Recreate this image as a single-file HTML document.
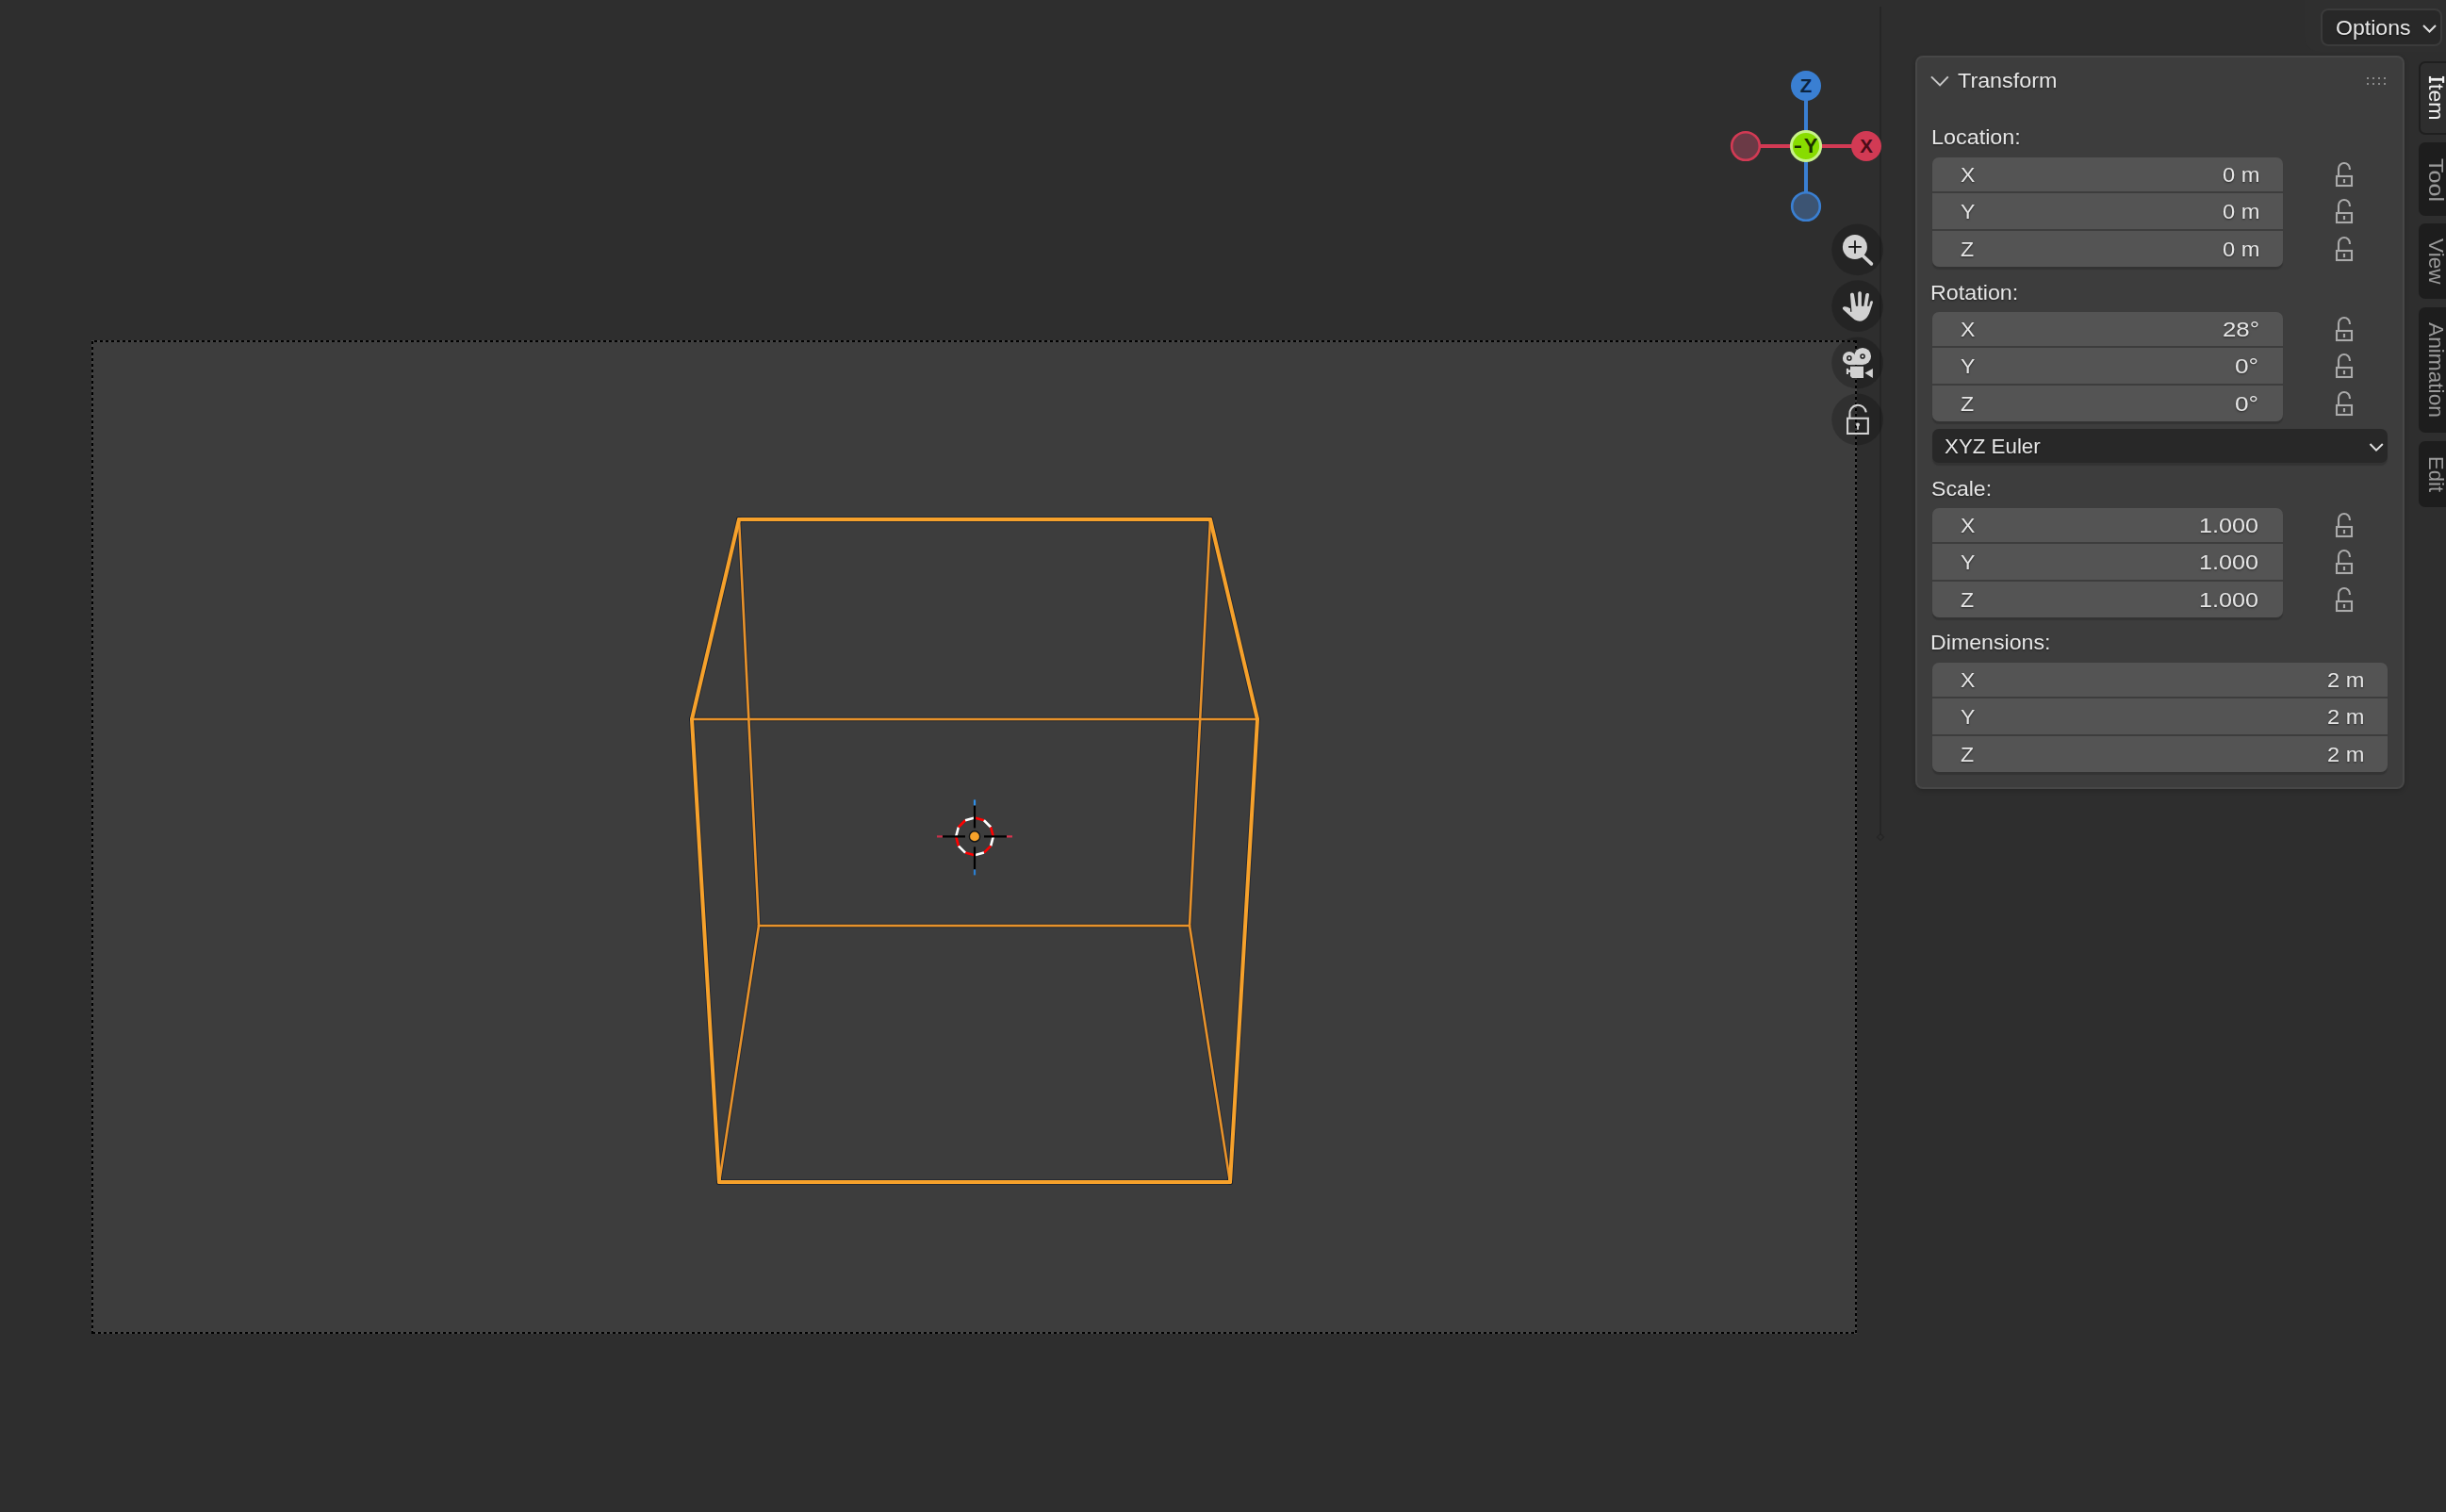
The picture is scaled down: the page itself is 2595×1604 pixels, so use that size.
<!DOCTYPE html><html><head><meta charset="utf-8"><style>
*{margin:0;padding:0;box-sizing:border-box}
html,body{width:2595px;height:1604px;overflow:hidden;background:#2e2e2e}
body{position:relative;font-family:"Liberation Sans", sans-serif;color:#e6e6e6}
.a{position:absolute}
.t{position:absolute;font-size:22px;line-height:30px;height:30px;white-space:nowrap;text-shadow:0 1px 2px rgba(0,0,0,.55);filter:grayscale(1)}
.blk{position:absolute;background:#545454;border-radius:7px;box-shadow:0 3px 1px rgba(0,0,0,.16)}
.sep{position:absolute;left:0;right:0;height:2px;background:#3d3d3d}
.tab{position:absolute;left:2566px;width:40px;border-radius:7px;background:#1d1d1d}
.tab span{position:absolute;left:50%;top:50%;transform:translate(-50%,-50%) rotate(90deg);font-size:22px;line-height:22px;white-space:nowrap;color:#a0a0a0}
</style></head><body><div class="a" style="left:97px;top:361px;width:1873px;height:1054px;background:#3d3d3d"></div>
<div class="a" style="left:1994px;top:7px;width:2px;height:879px;background:#262626"></div>
<div class="a" style="left:1991.5px;top:884.5px;width:6px;height:6px;border:1.6px solid #242424;transform:rotate(45deg)"></div>
<svg class="a" style="left:0;top:0" width="2595" height="1604" viewBox="0 0 2595 1604"><g fill="none" stroke-width="2"><rect x="98" y="362" width="1871" height="1052" stroke="#454545"/><line x1="97" y1="362" x2="1970" y2="362" stroke="#000" stroke-dasharray="3 3" stroke-dashoffset="3"/><line x1="97" y1="1414" x2="1970" y2="1414" stroke="#000" stroke-dasharray="3 3" stroke-dashoffset="5"/><line x1="98" y1="361" x2="98" y2="1415" stroke="#000" stroke-dasharray="3 3" stroke-dashoffset="-1"/><line x1="1969" y1="361" x2="1969" y2="1415" stroke="#000" stroke-dasharray="3 3" stroke-dashoffset="0"/></g><g stroke-linecap="round"><line x1="734" y1="763" x2="1334" y2="763" stroke="rgba(20,28,40,.55)" stroke-width="4.5" /><line x1="784" y1="551" x2="805" y2="982" stroke="rgba(20,28,40,.55)" stroke-width="4.5" /><line x1="1284" y1="551" x2="1262" y2="982" stroke="rgba(20,28,40,.55)" stroke-width="4.5" /><line x1="805" y1="982" x2="1262" y2="982" stroke="rgba(20,28,40,.55)" stroke-width="4.5" /><line x1="805" y1="982" x2="763" y2="1254" stroke="rgba(20,28,40,.55)" stroke-width="4.5" /><line x1="1262" y1="982" x2="1305" y2="1254" stroke="rgba(20,28,40,.55)" stroke-width="4.5" /><line x1="784" y1="551" x2="1284" y2="551" stroke="rgba(20,28,40,.55)" stroke-width="6" /><line x1="784" y1="551" x2="734" y2="763" stroke="rgba(20,28,40,.55)" stroke-width="6" /><line x1="1284" y1="551" x2="1334" y2="763" stroke="rgba(20,28,40,.55)" stroke-width="6" /><line x1="734" y1="763" x2="763" y2="1254" stroke="rgba(20,28,40,.55)" stroke-width="6" /><line x1="1334" y1="763" x2="1305" y2="1254" stroke="rgba(20,28,40,.55)" stroke-width="6" /><line x1="763" y1="1254" x2="1305" y2="1254" stroke="rgba(20,28,40,.55)" stroke-width="6" /><line x1="734" y1="763" x2="1334" y2="763" stroke="#e8922a" stroke-width="2.6" /><line x1="784" y1="551" x2="805" y2="982" stroke="#e8922a" stroke-width="2.6" /><line x1="1284" y1="551" x2="1262" y2="982" stroke="#e8922a" stroke-width="2.6" /><line x1="805" y1="982" x2="1262" y2="982" stroke="#e8922a" stroke-width="2.6" /><line x1="805" y1="982" x2="763" y2="1254" stroke="#e8922a" stroke-width="2.6" /><line x1="1262" y1="982" x2="1305" y2="1254" stroke="#e8922a" stroke-width="2.6" /><line x1="784" y1="551" x2="1284" y2="551" stroke="#f6a12b" stroke-width="4" /><line x1="784" y1="551" x2="734" y2="763" stroke="#f6a12b" stroke-width="4" /><line x1="1284" y1="551" x2="1334" y2="763" stroke="#f6a12b" stroke-width="4" /><line x1="734" y1="763" x2="763" y2="1254" stroke="#f6a12b" stroke-width="4" /><line x1="1334" y1="763" x2="1305" y2="1254" stroke="#f6a12b" stroke-width="4" /><line x1="763" y1="1254" x2="1305" y2="1254" stroke="#f6a12b" stroke-width="4" /></g><g stroke-width="2.6" stroke-linecap="butt"><line x1="1034.00" y1="867.60" x2="1043.90" y2="870.25" stroke="#ff0000"/><line x1="1043.90" y1="870.25" x2="1051.15" y2="877.50" stroke="#ffffff"/><line x1="1051.15" y1="877.50" x2="1053.80" y2="887.40" stroke="#ff0000"/><line x1="1053.80" y1="887.40" x2="1051.15" y2="897.30" stroke="#ffffff"/><line x1="1051.15" y1="897.30" x2="1043.90" y2="904.55" stroke="#ff0000"/><line x1="1043.90" y1="904.55" x2="1034.00" y2="907.20" stroke="#ffffff"/><line x1="1034.00" y1="907.20" x2="1024.10" y2="904.55" stroke="#ff0000"/><line x1="1024.10" y1="904.55" x2="1016.85" y2="897.30" stroke="#ffffff"/><line x1="1016.85" y1="897.30" x2="1014.20" y2="887.40" stroke="#ff0000"/><line x1="1014.20" y1="887.40" x2="1016.85" y2="877.50" stroke="#ffffff"/><line x1="1016.85" y1="877.50" x2="1024.10" y2="870.25" stroke="#ff0000"/><line x1="1024.10" y1="870.25" x2="1034.00" y2="867.60" stroke="#ffffff"/></g><g stroke-width="2.2"><line x1="1000" y1="887.4" x2="1024" y2="887.4" stroke="#000"/><line x1="1044" y1="887.4" x2="1068" y2="887.4" stroke="#000"/><line x1="1034" y1="854.4" x2="1034" y2="878.4" stroke="#000"/><line x1="1034" y1="898.4" x2="1034" y2="922.4" stroke="#000"/><line x1="994" y1="887.4" x2="1000" y2="887.4" stroke="#c8304a"/><line x1="1068" y1="887.4" x2="1074" y2="887.4" stroke="#d8354f"/><line x1="1034" y1="848.4" x2="1034" y2="854.4" stroke="#2f8fe8"/><line x1="1034" y1="922.4" x2="1034" y2="928.4" stroke="#2a7ed0"/></g><circle cx="1034" cy="887.4" r="5.6" fill="#f7a22a" stroke="#101418" stroke-width="1.4"/><g><line x1="1916" y1="91" x2="1916" y2="219" stroke="#3a7fd2" stroke-width="4"/><line x1="1852" y1="155" x2="1980" y2="155" stroke="#d23a54" stroke-width="4"/><circle cx="1852" cy="155" r="14.8" fill="#6b3a46" stroke="#d23a54" stroke-width="2.6"/><circle cx="1916" cy="219" r="14.8" fill="#3c5473" stroke="#3a7fd2" stroke-width="2.6"/><circle cx="1916" cy="91" r="16" fill="#3a7fd2"/><circle cx="1980" cy="155" r="16" fill="#d23a54"/><circle cx="1916" cy="155" r="15.6" fill="#88dc00" stroke="#c8f28a" stroke-width="3"/><text x="1916" y="97.5" text-anchor="middle" font-family='"Liberation Sans", sans-serif' font-size="20.5" font-weight="bold" fill="#0c2440">Z</text><text x="1980" y="161.9" text-anchor="middle" font-family='"Liberation Sans", sans-serif' font-size="20.5" font-weight="bold" fill="#4a0c18">X</text><rect x="1903.9" y="154.5" width="7" height="2.5" fill="#1c3000"/><text x="1921.0" y="162.0" text-anchor="middle" font-family='"Liberation Sans", sans-serif' font-size="22" font-weight="bold" fill="#1c3000">Y</text></g><circle cx="1970.6" cy="264.8" r="27.4" fill="rgba(0,0,0,.2)"/><circle cx="1970.6" cy="324.7" r="27.4" fill="rgba(0,0,0,.2)"/><circle cx="1970.6" cy="385" r="27.4" fill="rgba(0,0,0,.2)"/><circle cx="1970.6" cy="445" r="27.4" fill="rgba(0,0,0,.2)"/><g transform="translate(1950 245)"><circle cx="17.9" cy="17.0" r="13.0" fill="#d2d2d2"/><line x1="26.5" y1="26.5" x2="35.4" y2="34.9" stroke="#d2d2d2" stroke-width="3.6" stroke-linecap="round"/><line x1="11.2" y1="16.9" x2="24.8" y2="16.9" stroke="#151515" stroke-width="1.8"/><line x1="18.0" y1="10.3" x2="18.0" y2="23.7" stroke="#151515" stroke-width="1.8"/></g><path transform="translate(1950 305)" d="M6.0 20.5 C8.0 19.8 10.5 21.0 13.0 22.3 L13.0 25.8 L14.5 25.8 L13.0 7.8 C12.8 5.2 17.0 5.2 17.0 7.8 L19.0 19.8 L21.2 19.8 L21.2 6.0 C21.2 3.6 24.9 3.6 24.9 6.0 L24.9 19.8 L27.3 19.8 L29.2 7.8 C29.5 5.3 33.3 5.3 33.0 7.8 L31.0 19.8 L33.1 19.8 L34.0 15.8 C34.6 13.6 37.6 14.0 36.9 16.0 L34.5 23.5 C33.0 29.0 29.5 35.7 23.0 35.7 C19.0 35.7 16.5 33.5 12.7 30.0 L5.8 23.8 C4.3 22.5 4.8 20.9 6.0 20.5 Z" fill="#d2d2d2"/><g transform="translate(1950 365)" fill="#d2d2d2"><circle cx="11.9" cy="14.9" r="7.0"/><circle cx="26.06" cy="12.96" r="9.0"/><rect x="11.9" y="12.0" width="14.2" height="9.96"/><path d="M13.0 23.8 H27.0 V36.0 H15.0 L13.0 34.0 Z"/><rect x="8.9" y="25.9" width="2.1" height="6.1"/><rect x="10.9" y="27.4" width="2.2" height="2.6"/><polygon points="28.4,30.8 36.9,25.9 36.9,36.0"/></g><g transform="translate(1950 365)" fill="none" stroke="#202020" stroke-width="1.5"><circle cx="11.9" cy="14.9" r="2.05"/><circle cx="26.06" cy="12.96" r="2.05"/></g><g fill="none" stroke="#d2d2d2" stroke-width="2.1"><rect x="1960.05" y="443.75" width="21.8" height="16.2"/><path d="M1962.4 443 V439.9 A8.6 8.6 0 0 1 1979.8 437.3"/></g><circle cx="1971" cy="450.6" r="2" fill="#d2d2d2"/><line x1="1971" y1="451" x2="1971" y2="455.8" stroke="#d2d2d2" stroke-width="1.8"/></svg>
<div class="a" style="left:2445px;top:0;width:150px;height:55px;background:#2f2f2f;border-bottom-left-radius:16px"></div>
<div class="a" style="left:2462px;top:9px;width:129px;height:40px;background:#282828;border:2px solid #3b3b3b;border-radius:8px"></div>
<div class="t" style="left:2477.55px;top:15.10px;color:#e6e6e6;transform:scaleX(1.0486);transform-origin:0 0;">Options</div>
<svg class="a" style="left:2568px;top:22px" width="20" height="16"><polyline points="3,5 9.5,11.5 16,5" fill="none" stroke="#e0e0e0" stroke-width="2"/></svg>
<div class="a" style="left:2032px;top:59px;width:519px;height:778px;background:#3d3d3d;border:2px solid #474747;border-radius:8px;box-shadow:0 2px 5px rgba(0,0,0,.18)"></div>
<svg class="a" style="left:2044px;top:76px" width="28" height="20"><polyline points="5,5.4 14.1,14.4 22.8,5.4" fill="none" stroke="#c8c8c8" stroke-width="2"/></svg>
<div class="t" style="left:2076.90px;top:70.90px;color:#e6e6e6;transform:scaleX(1.0602);transform-origin:0 0;">Transform</div>
<svg class="a" style="left:2511px;top:82px" width="24" height="10"><rect x="0" y="0" width="2" height="2" fill="#8a8a8a"/><rect x="0" y="6" width="2" height="2" fill="#8a8a8a"/><rect x="6" y="0" width="2" height="2" fill="#8a8a8a"/><rect x="6" y="6" width="2" height="2" fill="#8a8a8a"/><rect x="12" y="0" width="2" height="2" fill="#8a8a8a"/><rect x="12" y="6" width="2" height="2" fill="#8a8a8a"/><rect x="18" y="0" width="2" height="2" fill="#8a8a8a"/><rect x="18" y="6" width="2" height="2" fill="#8a8a8a"/></svg>
<div class="t" style="left:2048.58px;top:131.10px;color:#e6e6e6;transform:scaleX(1.0616);transform-origin:0 0;">Location:</div>
<div class="blk" style="left:2050px;top:167px;width:372px;height:116px"><div class="sep" style="top:36px"></div><div class="sep" style="top:76px"></div></div>
<div class="t" style="left:2080.45px;top:171.00px;color:#e6e6e6;transform:scaleX(1.0462);transform-origin:0 0;">X</div>
<div class="t" style="left:2357.62px;top:171.00px;color:#e6e6e6;transform:scaleX(1.0765);transform-origin:0 0;">0 m</div>
<svg class="a" style="left:2475px;top:169px" width="24" height="32" viewBox="2475 169 24 32"><g fill="none" stroke="#aaaaaa" stroke-width="2.1"><rect x="2479" y="187" width="16" height="10"/><path d="M2481 186 V179 A5.95 5.95 0 0 1 2492.9 179 V180"/></g><line x1="2487" y1="190" x2="2487" y2="194.1" stroke="#aaaaaa" stroke-width="2.2"/></svg>
<div class="t" style="left:2080.45px;top:210.00px;color:#e6e6e6;transform:scaleX(1.0462);transform-origin:0 0;">Y</div>
<div class="t" style="left:2357.62px;top:210.00px;color:#e6e6e6;transform:scaleX(1.0765);transform-origin:0 0;">0 m</div>
<svg class="a" style="left:2475px;top:208px" width="24" height="32" viewBox="2475 208 24 32"><g fill="none" stroke="#aaaaaa" stroke-width="2.1"><rect x="2479" y="226" width="16" height="10"/><path d="M2481 225 V218 A5.95 5.95 0 0 1 2492.9 218 V219"/></g><line x1="2487" y1="229" x2="2487" y2="233.1" stroke="#aaaaaa" stroke-width="2.2"/></svg>
<div class="t" style="left:2080.35px;top:250.00px;color:#e6e6e6;transform:scaleX(1.0500);transform-origin:0 0;">Z</div>
<div class="t" style="left:2357.62px;top:250.00px;color:#e6e6e6;transform:scaleX(1.0765);transform-origin:0 0;">0 m</div>
<svg class="a" style="left:2475px;top:248px" width="24" height="32" viewBox="2475 248 24 32"><g fill="none" stroke="#aaaaaa" stroke-width="2.1"><rect x="2479" y="266" width="16" height="10"/><path d="M2481 265 V258 A5.95 5.95 0 0 1 2492.9 258 V259"/></g><line x1="2487" y1="269" x2="2487" y2="273.1" stroke="#aaaaaa" stroke-width="2.2"/></svg>
<div class="t" style="left:2048.08px;top:295.60px;color:#e6e6e6;transform:scaleX(1.0595);transform-origin:0 0;">Rotation:</div>
<div class="blk" style="left:2050px;top:331px;width:372px;height:116px"><div class="sep" style="top:36px"></div><div class="sep" style="top:76px"></div></div>
<div class="t" style="left:2080.45px;top:335.00px;color:#e6e6e6;transform:scaleX(1.0462);transform-origin:0 0;">X</div>
<div class="t" style="left:2357.73px;top:335.00px;color:#e6e6e6;transform:scaleX(1.1742);transform-origin:0 0;">28°</div>
<svg class="a" style="left:2475px;top:333px" width="24" height="32" viewBox="2475 333 24 32"><g fill="none" stroke="#aaaaaa" stroke-width="2.1"><rect x="2479" y="351" width="16" height="10"/><path d="M2481 350 V343 A5.95 5.95 0 0 1 2492.9 343 V344"/></g><line x1="2487" y1="354" x2="2487" y2="358.1" stroke="#aaaaaa" stroke-width="2.2"/></svg>
<div class="t" style="left:2080.45px;top:374.00px;color:#e6e6e6;transform:scaleX(1.0462);transform-origin:0 0;">Y</div>
<div class="t" style="left:2371.41px;top:374.00px;color:#e6e6e6;transform:scaleX(1.1947);transform-origin:0 0;">0°</div>
<svg class="a" style="left:2475px;top:372px" width="24" height="32" viewBox="2475 372 24 32"><g fill="none" stroke="#aaaaaa" stroke-width="2.1"><rect x="2479" y="390" width="16" height="10"/><path d="M2481 389 V382 A5.95 5.95 0 0 1 2492.9 382 V383"/></g><line x1="2487" y1="393" x2="2487" y2="397.1" stroke="#aaaaaa" stroke-width="2.2"/></svg>
<div class="t" style="left:2080.35px;top:414.00px;color:#e6e6e6;transform:scaleX(1.0500);transform-origin:0 0;">Z</div>
<div class="t" style="left:2371.41px;top:414.00px;color:#e6e6e6;transform:scaleX(1.1947);transform-origin:0 0;">0°</div>
<svg class="a" style="left:2475px;top:412px" width="24" height="32" viewBox="2475 412 24 32"><g fill="none" stroke="#aaaaaa" stroke-width="2.1"><rect x="2479" y="430" width="16" height="10"/><path d="M2481 429 V422 A5.95 5.95 0 0 1 2492.9 422 V423"/></g><line x1="2487" y1="433" x2="2487" y2="437.1" stroke="#aaaaaa" stroke-width="2.2"/></svg>
<div class="a" style="left:2050px;top:455px;width:483px;height:36px;background:#282828;border-radius:7px;box-shadow:0 3px 1px rgba(0,0,0,.16)"></div>
<div class="t" style="left:2063.19px;top:459.00px;color:#e6e6e6;transform:scaleX(1.0141);transform-origin:0 0;">XYZ Euler</div>
<svg class="a" style="left:2510px;top:465px" width="22" height="20"><polyline points="4.5,6 11,12.7 17.8,6" fill="none" stroke="#e0e0e0" stroke-width="2"/></svg>
<div class="t" style="left:2049.15px;top:503.80px;color:#e6e6e6;transform:scaleX(1.0483);transform-origin:0 0;">Scale:</div>
<div class="blk" style="left:2050px;top:539px;width:372px;height:116px"><div class="sep" style="top:36px"></div><div class="sep" style="top:76px"></div></div>
<div class="t" style="left:2080.45px;top:543.00px;color:#e6e6e6;transform:scaleX(1.0462);transform-origin:0 0;">X</div>
<div class="t" style="left:2333.41px;top:543.00px;color:#e6e6e6;transform:scaleX(1.1462);transform-origin:0 0;">1.000</div>
<svg class="a" style="left:2475px;top:541px" width="24" height="32" viewBox="2475 541 24 32"><g fill="none" stroke="#aaaaaa" stroke-width="2.1"><rect x="2479" y="559" width="16" height="10"/><path d="M2481 558 V551 A5.95 5.95 0 0 1 2492.9 551 V552"/></g><line x1="2487" y1="562" x2="2487" y2="566.1" stroke="#aaaaaa" stroke-width="2.2"/></svg>
<div class="t" style="left:2080.45px;top:582.00px;color:#e6e6e6;transform:scaleX(1.0462);transform-origin:0 0;">Y</div>
<div class="t" style="left:2333.41px;top:582.00px;color:#e6e6e6;transform:scaleX(1.1462);transform-origin:0 0;">1.000</div>
<svg class="a" style="left:2475px;top:580px" width="24" height="32" viewBox="2475 580 24 32"><g fill="none" stroke="#aaaaaa" stroke-width="2.1"><rect x="2479" y="598" width="16" height="10"/><path d="M2481 597 V590 A5.95 5.95 0 0 1 2492.9 590 V591"/></g><line x1="2487" y1="601" x2="2487" y2="605.1" stroke="#aaaaaa" stroke-width="2.2"/></svg>
<div class="t" style="left:2080.35px;top:622.00px;color:#e6e6e6;transform:scaleX(1.0500);transform-origin:0 0;">Z</div>
<div class="t" style="left:2333.41px;top:622.00px;color:#e6e6e6;transform:scaleX(1.1462);transform-origin:0 0;">1.000</div>
<svg class="a" style="left:2475px;top:620px" width="24" height="32" viewBox="2475 620 24 32"><g fill="none" stroke="#aaaaaa" stroke-width="2.1"><rect x="2479" y="638" width="16" height="10"/><path d="M2481 637 V630 A5.95 5.95 0 0 1 2492.9 630 V631"/></g><line x1="2487" y1="641" x2="2487" y2="645.1" stroke="#aaaaaa" stroke-width="2.2"/></svg>
<div class="t" style="left:2048.09px;top:667.00px;color:#e6e6e6;transform:scaleX(1.0530);transform-origin:0 0;">Dimensions:</div>
<div class="blk" style="left:2050px;top:703px;width:483px;height:116px"><div class="sep" style="top:36px"></div><div class="sep" style="top:76px"></div></div>
<div class="t" style="left:2080.45px;top:707.00px;color:#e6e6e6;transform:scaleX(1.0462);transform-origin:0 0;">X</div>
<div class="t" style="left:2468.73px;top:707.00px;color:#e6e6e6;transform:scaleX(1.0735);transform-origin:0 0;">2 m</div>
<div class="t" style="left:2080.45px;top:746.00px;color:#e6e6e6;transform:scaleX(1.0462);transform-origin:0 0;">Y</div>
<div class="t" style="left:2468.73px;top:746.00px;color:#e6e6e6;transform:scaleX(1.0735);transform-origin:0 0;">2 m</div>
<div class="t" style="left:2080.35px;top:786.00px;color:#e6e6e6;transform:scaleX(1.0500);transform-origin:0 0;">Z</div>
<div class="t" style="left:2468.73px;top:786.00px;color:#e6e6e6;transform:scaleX(1.0735);transform-origin:0 0;">2 m</div>
<div class="tab" style="top:64.5px;height:78.0px;background:#2e2e2e;border:2px solid #1f1f1f"></div>
<div class="t" style="left:2598.50px;top:89.10px;color:#f0f0f0;text-shadow:none;transform:rotate(90deg) scaleX(1.0486);transform-origin:0 0">tem</div>
<svg class="a" style="left:2570px;top:75px" width="28" height="18"><g fill="#f0f0f0"><rect x="6.9" y="5.95" width="2.2" height="6.95"/><rect x="21.0" y="5.95" width="2.2" height="6.95"/><rect x="9.1" y="7.9" width="11.9" height="2.8"/></g></svg>
<div class="tab" style="top:150.8px;height:78.0px;background:#1d1d1d"></div>
<div class="t" style="left:2598.50px;top:167.50px;color:#9a9a9a;text-shadow:none;transform:rotate(90deg) scaleX(1.1436);transform-origin:0 0">Tool</div>
<div class="tab" style="top:237.1px;height:80.20000000000002px;background:#1d1d1d"></div>
<div class="t" style="left:2598.50px;top:253.00px;color:#9a9a9a;text-shadow:none;transform:rotate(90deg) scaleX(1.0250);transform-origin:0 0">View</div>
<div class="tab" style="top:326px;height:133.39999999999998px;background:#1d1d1d"></div>
<div class="t" style="left:2598.50px;top:341.90px;color:#9a9a9a;text-shadow:none;transform:rotate(90deg) scaleX(1.0309);transform-origin:0 0">Animation</div>
<div class="tab" style="top:467.8px;height:70.19999999999999px;background:#1d1d1d"></div>
<div class="t" style="left:2598.50px;top:483.59px;color:#9a9a9a;text-shadow:none;transform:rotate(90deg) scaleX(1.0028);transform-origin:0 0">Edit</div></body></html>
